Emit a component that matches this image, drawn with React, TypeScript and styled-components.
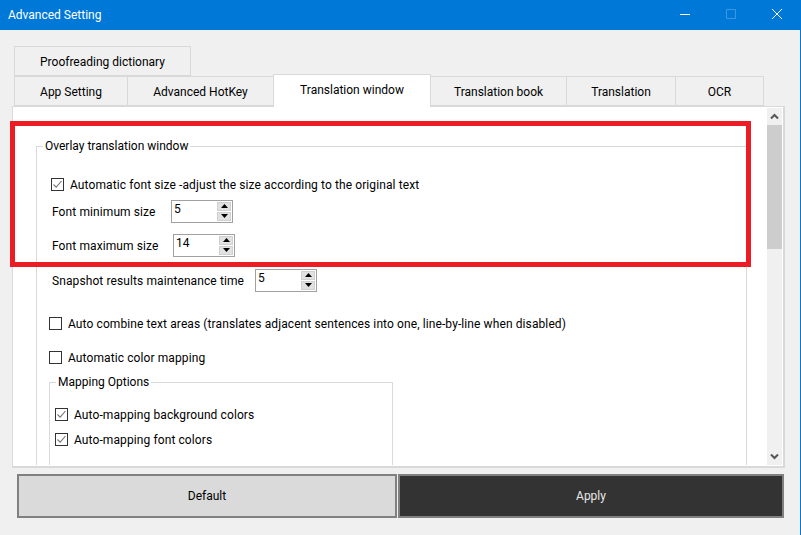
import React from "react";
import styled, { createGlobalStyle } from "styled-components";

const GlobalStyle = createGlobalStyle`
  html, body {
    margin: 0;
    padding: 0;
    background: #f0f0f0;
  }
  body {
    font-family: Roboto, "Noto Sans", "Liberation Sans", sans-serif;
    font-size: 12px;
    color: #000;
  }
`;

const TABS_TOP = [{ label: "Proofreading dictionary", width: 177 }];

const TABS_BOTTOM = [
  { label: "App Setting", width: 114 },
  { label: "Advanced HotKey", width: 147 },
  { label: "Translation window", width: 158, active: true },
  { label: "Translation book", width: 137 },
  { label: "Translation", width: 110 },
  { label: "OCR", width: 89 },
];

const Check = ({ checked }: { checked?: boolean }) => (
  <CheckBox>
    {checked && (
      <svg width="11" height="11" viewBox="0 0 11 11" fill="none">
        <path d="M1.5 5.5 L4.2 8.2 L9.5 2" stroke="#777" strokeWidth="1.1" />
      </svg>
    )}
  </CheckBox>
);

const Spin = ({ value }: { value: number }) => (
  <SpinBox>
    <SpinValue>{value}</SpinValue>
    <SpinButtons>
      <SpinButton>
        <svg width="7" height="4" viewBox="0 0 7 4">
          <path d="M3.5 0 L7 4 L0 4 Z" fill="#000" />
        </svg>
      </SpinButton>
      <SpinButton>
        <svg width="7" height="4" viewBox="0 0 7 4">
          <path d="M0 0 L7 0 L3.5 4 Z" fill="#000" />
        </svg>
      </SpinButton>
    </SpinButtons>
  </SpinBox>
);

export default function App() {
  return (
    <Window>
      <GlobalStyle />
      <TitleBar>
        <Title>Advanced Setting</Title>
        <Controls>
          <ControlButton>
            <svg width="10" height="10" viewBox="0 0 10 10">
              <path d="M0 5.5 H10" stroke="#fff" />
            </svg>
          </ControlButton>
          <ControlButton>
            <svg width="10" height="10" viewBox="0 0 10 10" fill="none">
              <path d="M0.5 0.5 H9.5 V9.5 H0.5 Z" stroke="#3d97e0" />
            </svg>
          </ControlButton>
          <ControlButton>
            <svg width="10" height="10" viewBox="0 0 10 10" fill="none">
              <path d="M0 0 L10 10 M10 0 L0 10" stroke="#fff" />
            </svg>
          </ControlButton>
        </Controls>
      </TitleBar>

      <Body>
        <TabRow>
          {TABS_TOP.map((tab) => (
            <Tab key={tab.label} $width={tab.width}>
              {tab.label}
            </Tab>
          ))}
        </TabRow>
        <TabRow>
          {TABS_BOTTOM.map((tab) => (
            <Tab key={tab.label} $width={tab.width} $active={tab.active}>
              {tab.label}
            </Tab>
          ))}
        </TabRow>

        <Panel>
          <ScrollArea>
            <Group>
              <GroupTitle $shift={-6}>Overlay translation window</GroupTitle>
              <Row $top={18} $indent={2}>
                <Check checked />
                <RowText>Automatic font size -adjust the size according to the original text</RowText>
              </Row>
              <Row $top={3} $indent={3}>
                <RowText $width={119}>Font minimum size</RowText>
                <Spin value={5} />
              </Row>
              <Row $top={10} $indent={3}>
                <RowText $width={121}>Font maximum size</RowText>
                <Spin value={14} />
              </Row>
              <Row $top={11} $indent={3}>
                <RowText $width={203}>Snapshot results maintenance time</RowText>
                <Spin value={5} />
              </Row>
              <Row $top={19}>
                <Check />
                <RowText>
                  Auto combine text areas (translates adjacent sentences into one, line-by-line when disabled)
                </RowText>
              </Row>
              <Row $top={10}>
                <Check />
                <RowText>Automatic color mapping</RowText>
              </Row>
              <SubGroup>
                <GroupTitle $shift={1}>Mapping Options</GroupTitle>
                <Row $top={12}>
                  <Check checked />
                  <RowText>Auto-mapping background colors</RowText>
                </Row>
                <Row $top={1}>
                  <Check checked />
                  <RowText>Auto-mapping font colors</RowText>
                </Row>
              </SubGroup>
            </Group>
          </ScrollArea>

          <ScrollBar>
            <ScrollArrow>
              <svg width="9" height="7" viewBox="0 0 9 7" fill="none">
                <path d="M1 5.5 L4.5 2 L8 5.5" stroke="#555" strokeWidth="2" />
              </svg>
            </ScrollArrow>
            <ScrollThumb />
            <ScrollTrack />
            <ScrollArrow>
              <svg width="9" height="7" viewBox="0 0 9 7" fill="none">
                <path d="M1 1.5 L4.5 5 L8 1.5" stroke="#555" strokeWidth="2" />
              </svg>
            </ScrollArrow>
          </ScrollBar>

          <Highlight />
        </Panel>

        <ButtonRow>
          <ActionButton>Default</ActionButton>
          <ActionButton $dark>Apply</ActionButton>
        </ButtonRow>
      </Body>
    </Window>
  );
}

const Window = styled.div`
  width: 801px;
  height: 535px;
  display: flex;
  flex-direction: column;
  overflow: hidden;
  box-sizing: border-box;
  border-right: 1px solid #0078d7;
`;

const TitleBar = styled.div`
  height: 30px;
  flex: none;
  background: #0078d7;
  display: flex;
  align-items: center;
  justify-content: space-between;
  padding-left: 8px;
`;

const Title = styled.div`
  color: #fff;
  font-size: 12px;
`;

const Controls = styled.div`
  display: flex;
  height: 100%;
`;

const ControlButton = styled.div`
  width: 46px;
  display: flex;
  align-items: center;
  justify-content: center;
  padding-bottom: 2px;
`;

const Body = styled.div`
  flex: 1;
  display: flex;
  flex-direction: column;
  padding-top: 16px;
`;

const TabRow = styled.div`
  height: 30px;
  flex: none;
  display: flex;
  align-items: flex-end;
  margin-left: 14px;
`;

const Tab = styled.div<{ $width: number; $active?: boolean }>`
  box-sizing: border-box;
  width: ${(p) => p.$width}px;
  height: ${(p) => (p.$active ? 33 : 30)}px;
  margin-left: -1px;
  margin-bottom: ${(p) => (p.$active ? -1 : 0)}px;
  padding-top: ${(p) => (p.$active ? 0 : 1)}px;
  padding-bottom: ${(p) => (p.$active ? 3 : 0)}px;
  display: flex;
  align-items: center;
  justify-content: center;
  background: ${(p) => (p.$active ? "#fff" : "#f0f0f0")};
  border: 1px solid #d9d9d9;
  border-bottom: ${(p) => (p.$active ? "none" : "1px solid #d9d9d9")};
  position: relative;
  z-index: ${(p) => (p.$active ? 2 : 0)};

  &:first-child {
    margin-left: 0;
  }
`;

const Panel = styled.div`
  position: relative;
  box-sizing: border-box;
  width: 773px;
  height: 362px;
  margin-left: 12px;
  flex: none;
  display: flex;
  background: #fff;
  border: 1px solid #d9d9d9;
  border-right-width: 2px;
  border-bottom-width: 2px;
`;

const ScrollArea = styled.div`
  width: 754px;
  flex: none;
  overflow: hidden;
  height: 358px;
  padding-top: 31px;
  box-sizing: border-box;
`;

const Group = styled.fieldset`
  box-sizing: border-box;
  margin: 0 20px 0 23px;
  padding: 0 0 0 12px;
  height: 600px;
  min-width: 0;
  border: 1px solid #d9d9d9;
`;

const GroupTitle = styled.legend<{ $shift: number }>`
  padding: 0 2px;
  margin-left: ${(p) => p.$shift}px;
  line-height: 16px;
`;

const SubGroup = styled.fieldset`
  box-sizing: border-box;
  width: 344px;
  height: 300px;
  min-width: 0;
  margin: 5px 0 0;
  padding: 0 0 0 5px;
  border: 1px solid #d9d9d9;
`;

const Row = styled.div<{ $top: number; $indent?: number }>`
  height: 24px;
  display: flex;
  align-items: center;
  margin-top: ${(p) => p.$top}px;
  padding-left: ${(p) => p.$indent ?? 0}px;
  white-space: nowrap;
`;

const RowText = styled.div<{ $width?: number }>`
  ${(p) => (p.$width ? `width: ${p.$width}px; flex: none;` : "")}
  padding-top: 1px;
  letter-spacing: 0.1px;
`;

const CheckBox = styled.div`
  box-sizing: border-box;
  width: 13px;
  height: 13px;
  margin-right: 6px;
  flex: none;
  border: 1px solid #333;
  background: #fff;
  display: flex;
  align-items: center;
  justify-content: center;
`;

const SpinBox = styled.div`
  box-sizing: border-box;
  width: 62px;
  height: 23px;
  flex: none;
  border: 1px solid #a0a0a0;
  padding: 1px;
  display: flex;
  justify-content: space-between;
  background: #fff;
`;

const SpinValue = styled.div`
  padding-left: 1px;
  line-height: 15px;
`;

const SpinButtons = styled.div`
  display: flex;
  flex-direction: column;
  gap: 1px;
  width: 14px;
`;

const SpinButton = styled.div`
  flex: 1;
  background: #e1e1e1;
  border: 1px solid #d0d0d0;
  display: flex;
  align-items: center;
  justify-content: center;
`;

const ScrollBar = styled.div`
  width: 15px;
  height: 357px;
  margin-top: 1px;
  background: #f0f0f0;
  display: flex;
  flex-direction: column;
`;

const ScrollArrow = styled.div`
  height: 17px;
  flex: none;
  display: flex;
  align-items: center;
  justify-content: center;
`;

const ScrollThumb = styled.div`
  height: 124px;
  flex: none;
  background: #cdcdcd;
`;

const ScrollTrack = styled.div`
  flex: 1;
`;

/* red annotation drawn over the screenshot */
const Highlight = styled.div`
  position: absolute;
  left: -3px;
  top: 14px;
  width: 741px;
  height: 146px;
  box-sizing: border-box;
  border: 5px solid #ed1c24;
  pointer-events: none;
`;

const ButtonRow = styled.div`
  display: grid;
  grid-template-columns: 380px 386px;
  gap: 1px;
  height: 44px;
  margin: 6px 0 0 17px;
`;

const ActionButton = styled.div<{ $dark?: boolean }>`
  display: flex;
  align-items: center;
  justify-content: center;
  border: 2px solid #808080;
  background: ${(p) => (p.$dark ? "#333" : "#dadada")};
  color: ${(p) => (p.$dark ? "#e8e8e8" : "#000")};
`;
